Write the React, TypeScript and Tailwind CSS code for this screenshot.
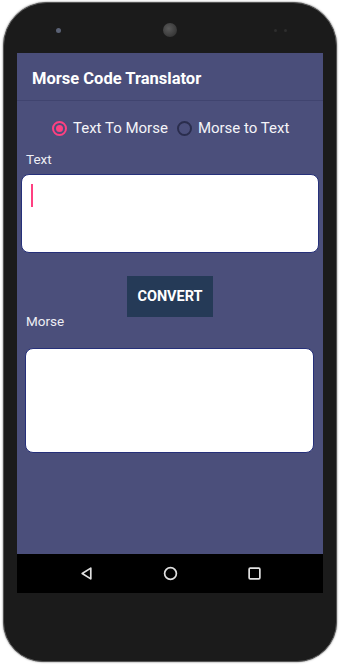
import { useState } from "react";

export default function App() {
  const [mode, setMode] = useState<"t2m" | "m2t">("t2m");

  return (
    <div className="h-[667px] w-[340px] overflow-hidden bg-white font-['Roboto',sans-serif]">
      <div className="mx-[3px] mt-[2px] flex h-[660px] flex-col rounded-t-[44px] rounded-b-[40px] border border-[#555] bg-[#1b1b1b] shadow-[0_0_2px_rgba(0,0,0,0.6)]">
        {/* top bezel */}
        <div className="flex h-[50px] shrink-0 items-center pl-[52px] pt-[4px]">
          <div className="h-[5px] w-[5px] rounded-full bg-[#5b6275]" />
          <div className="ml-[102px] h-[14px] w-[14px] rounded-full bg-[radial-gradient(circle_at_40%_40%,#5a5a5a,#2a2a2a)]" />
          <div className="ml-[97px] h-[3px] w-[3px] rounded-full bg-[#2e2e2e]" />
          <div className="ml-[7px] h-[3px] w-[3px] rounded-full bg-[#2e2e2e]" />
        </div>

        {/* screen */}
        <div className="mx-[13px] flex flex-col">
          <div className="flex h-[501px] flex-col bg-[#4b4f7b]">
            <div className="flex h-[48px] items-center border-b border-[#40446f] bg-[#4a4e7a] pl-[15px] pt-[5px] text-[16.5px] font-bold text-white">
              Morse Code Translator
            </div>

            <div className="mt-[17px] flex h-[20px] items-center pl-[35px] text-[15px] text-[#f4f4f8]">
              <button
                type="button"
                onClick={() => setMode("t2m")}
                className="flex items-center"
              >
                <span
                  className={
                    mode === "t2m"
                      ? "flex h-[15px] w-[15px] items-center justify-center rounded-full border-2 border-[#ff4081]"
                      : "flex h-[15px] w-[15px] items-center justify-center rounded-full border-2 border-[#2a2d4d]"
                  }
                >
                  {mode === "t2m" && <span className="h-[7px] w-[7px] rounded-full bg-[#ff4081]" />}
                </span>
                <span className="ml-[6px]">Text To Morse</span>
              </button>
              <button
                type="button"
                onClick={() => setMode("m2t")}
                className="ml-[9px] flex items-center"
              >
                <span
                  className={
                    mode === "m2t"
                      ? "flex h-[15px] w-[15px] items-center justify-center rounded-full border-2 border-[#ff4081]"
                      : "flex h-[15px] w-[15px] items-center justify-center rounded-full border-2 border-[#2a2d4d]"
                  }
                >
                  {mode === "m2t" && <span className="h-[7px] w-[7px] rounded-full bg-[#ff4081]" />}
                </span>
                <span className="ml-[6px]">Morse to Text</span>
              </button>
            </div>

            <div className="mt-[14px] pl-[9px] text-[13.5px] leading-[14px] text-[#eeeef4]">Text</div>
            <div className="mx-[4px] mt-[8px] h-[79px] rounded-[8px] border border-[#26307a] bg-white px-[9px] pt-[9px]">
              <div className="h-[23px] w-[2px] bg-[#ff4081]" />
            </div>

            <button
              type="button"
              className="mx-auto mt-[23px] h-[41px] w-[86px] bg-[#253a57] text-[14.5px] font-bold text-white"
            >
              CONVERT
            </button>

            <div className="-mt-[2px] pl-[9px] text-[13.5px] leading-[12px] text-[#eeeef4]">Morse</div>
            <div className="ml-[8px] mt-[21px] h-[105px] w-[289px] rounded-[8px] border border-[#26307a] bg-white" />
          </div>

          {/* nav bar */}
          <div className="flex h-[39px] items-center bg-black text-[#e0e0e0]">
            <svg className="ml-[62px] h-[15px] w-[15px]" viewBox="0 0 14 14" fill="none" stroke="currentColor" strokeWidth="1.6" strokeLinejoin="round">
              <path d="M11 2 L3 7 L11 12 Z" />
            </svg>
            <svg className="ml-[69px] h-[15px] w-[15px]" viewBox="0 0 14 14" fill="none" stroke="currentColor" strokeWidth="1.6">
              <circle cx="7" cy="7" r="5.5" />
            </svg>
            <svg className="ml-[69px] h-[15px] w-[15px]" viewBox="0 0 14 14" fill="none" stroke="currentColor" strokeWidth="1.6">
              <rect x="2" y="2" width="10" height="10" rx="1" />
            </svg>
          </div>
        </div>
      </div>
    </div>
  );
}
